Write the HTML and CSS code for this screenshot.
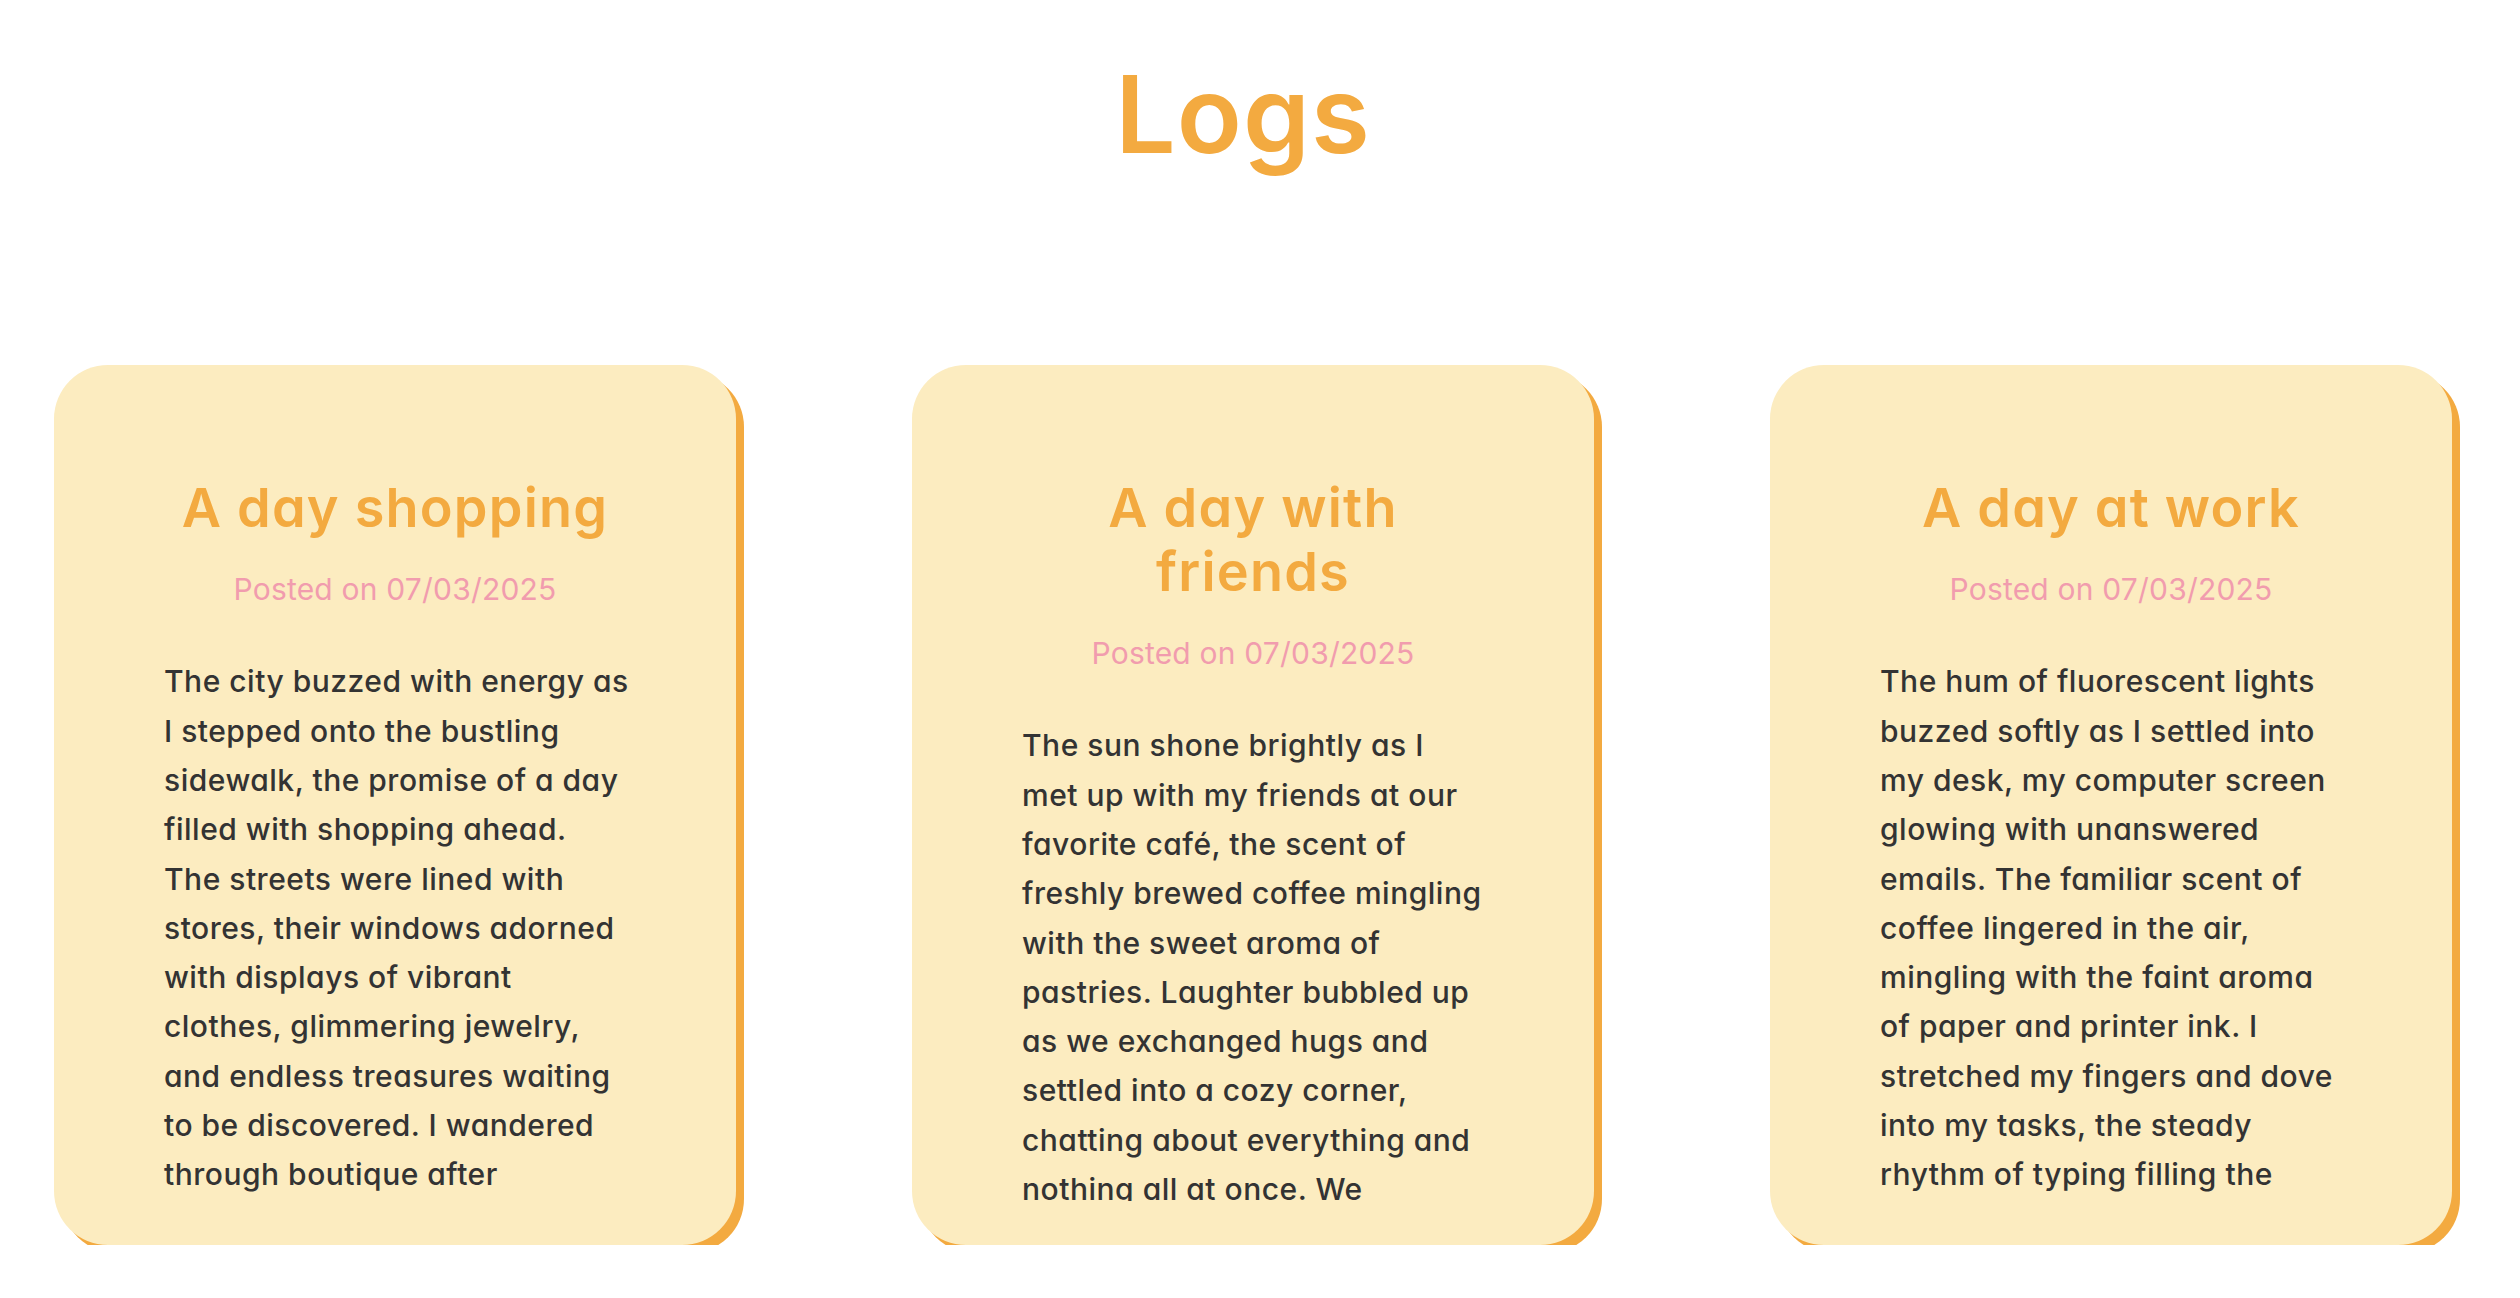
FILE: index.html
```html
<!DOCTYPE html>
<html lang="en">
<head>
    <meta charset="UTF-8">
    <meta name="viewport" content="width=device-width, initial-scale=1.0">
    <title>Logs</title>
    <link rel="stylesheet" href="styles.css">
</head>
<body>
    <div class="page">
        <h1 class="page-title">Logs</h1>

        <div class="logs">
            <article class="log-card">
                <div class="log-inner">
                    <h2 class="log-title">A day shopping</h2>
                    <p class="log-date">Posted on 07/03/2025</p>
                    <p class="log-text">The city buzzed with energy as<br>
                        I stepped onto the bustling<br>
                        sidewalk, the promise of a day<br>
                        filled with shopping ahead.<br>
                        The streets were lined with<br>
                        stores, their windows adorned<br>
                        with displays of vibrant<br>
                        clothes, glimmering jewelry,<br>
                        and endless treasures waiting<br>
                        to be discovered. I wandered<br>
                        through boutique after<br>
                        boutique, trying on hats and scarves, laughing at my reflection in the mirrors. By the afternoon my arms were full of bags and my feet were tired, but my heart was light.</p>
                </div>
            </article>

            <article class="log-card">
                <div class="log-inner">
                    <h2 class="log-title">A day with friends</h2>
                    <p class="log-date">Posted on 07/03/2025</p>
                    <p class="log-text">The sun shone brightly as I<br>
                        met up with my friends at our<br>
                        favorite café, the scent of<br>
                        freshly brewed coffee mingling<br>
                        with the sweet aroma of<br>
                        pastries. Laughter bubbled up<br>
                        as we exchanged hugs and<br>
                        settled into a cozy corner,<br>
                        chatting about everything and<br>
                        nothing all at once. We<br>
                        shared stories, made plans for the summer and lost track of time until the lights came on outside.</p>
                </div>
            </article>

            <article class="log-card">
                <div class="log-inner">
                    <h2 class="log-title">A day at work</h2>
                    <p class="log-date">Posted on 07/03/2025</p>
                    <p class="log-text">The hum of fluorescent lights<br>
                        buzzed softly as I settled into<br>
                        my desk, my computer screen<br>
                        glowing with unanswered<br>
                        emails. The familiar scent of<br>
                        coffee lingered in the air,<br>
                        mingling with the faint aroma<br>
                        of paper and printer ink. I<br>
                        stretched my fingers and dove<br>
                        into my tasks, the steady<br>
                        rhythm of typing filling the<br>
                        quiet office as the morning slowly slipped into afternoon.</p>
                </div>
            </article>
        </div>
    </div>
</body>
</html>
```

FILE: styles.css
```css
body {
    font-family: Inter, "Noto Sans", sans-serif;
    font-feature-settings: "cv11";
    margin: 0;
    padding: 0;
    background: #ffffff;
    color: #333333;
}

.page {
    max-width: 2506px;
    padding: 0 54px;
    box-sizing: border-box;
}

.page-title {
    margin: 50px 0 0;
    padding-right: 20px;
    font-size: 107px;
    line-height: 1.2;
    font-weight: 600;
    letter-spacing: 1px;
    text-align: center;
    color: #f3aa40;
}

.logs {
    display: grid;
    grid-template-columns: repeat(3, 1fr);
    gap: 176px;
    margin-top: 187px;
}

.log-card {
    height: 880px;
    padding: 44px;
    box-sizing: border-box;
    background: #fcecc0;
    border-radius: 54px;
    box-shadow: 8px 8px 0 #f3aa40;
}

.log-inner {
    height: 100%;
    padding-top: 67px;
    box-sizing: border-box;
    overflow: hidden;
    border-radius: 16px;
    text-align: center;
}

.log-title {
    margin: 0;
    padding: 0 66px;
    font-size: 54px;
    line-height: 64px;
    font-weight: 600;
    letter-spacing: 1.2px;
    color: #f3aa40;
}

.log-date {
    margin: 29px 0 0;
    font-size: 30px;
    line-height: 40px;
    letter-spacing: 0.2px;
    color: #f19cae;
}

.log-text {
    margin: 48px 0 0;
    padding: 0 56px 0 66px;
    font-size: 30px;
    line-height: 49.3px;
    font-weight: 450;
    letter-spacing: 0.5px;
    text-align: left;
}
```
